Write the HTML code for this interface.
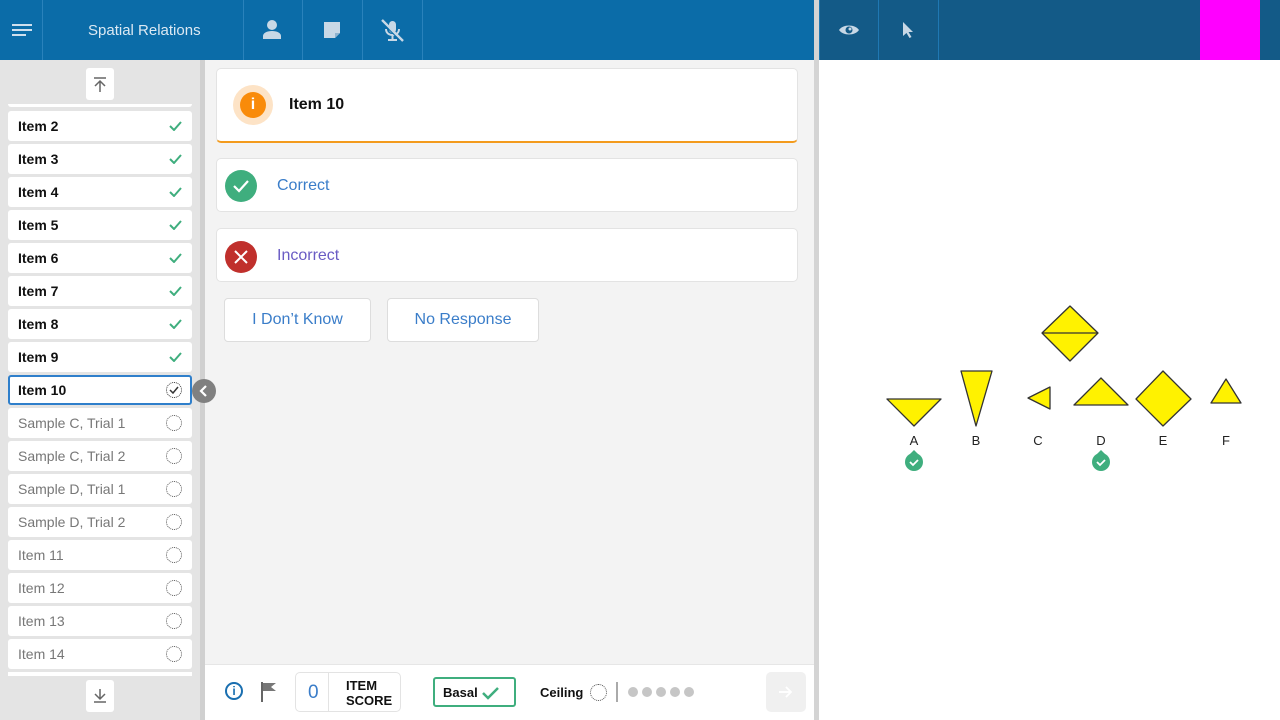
<!DOCTYPE html>
<html><head><style>
*{box-sizing:border-box;margin:0;padding:0}
body{width:1280px;height:720px;overflow:hidden;font-family:"Liberation Sans",sans-serif;background:#fff;position:relative}
.abs{position:absolute}
.hdr{left:0;top:0;width:814px;height:60px;background:#0b6ca8}
.sep{position:absolute;top:0;width:1px;height:60px;background:#2a82bb}
.item{position:absolute;left:8px;width:184px;height:30px;background:#fff;border-radius:3px;font-size:14px;line-height:30px;padding-left:10px;color:#111;font-weight:bold}
.item.g{font-weight:normal;color:#777}
.item .ck{position:absolute;right:10px;top:9px}
.item .dc{position:absolute;right:10px;top:7px;width:16px;height:16px;border:1.5px dotted #555;border-radius:50%}
.card{position:absolute;left:216px;width:582px;background:#fff;border:1px solid #e3e3e3;border-radius:5px}
.btn{position:absolute;top:298px;height:44px;background:#fff;border:1px solid #ddd;border-radius:4px;color:#3a7dc9;font-size:16px;line-height:42px;text-align:center}
</style></head><body>
<div class="abs hdr">
  <svg class="abs" style="left:12px;top:24px" width="20" height="12"><rect y="0" width="20" height="2" fill="#cfe0ee"/><rect y="5" width="20" height="2" fill="#cfe0ee"/><rect y="10" width="14" height="2" fill="#cfe0ee"/></svg>
  <div class="sep" style="left:42px"></div>
  <div class="abs" style="left:88px;top:22px;color:#dce9f3;font-size:15px">Spatial Relations</div>
  <div class="sep" style="left:243px"></div>
  <svg class="abs" style="left:262px;top:20px" width="20" height="19"><circle cx="10" cy="5" r="5" fill="#c8d8e6"/><path d="M1 19v-3c0-3 4-5 9-5s9 2 9 5v3z" fill="#c8d8e6"/></svg>
  <div class="sep" style="left:302px"></div>
  <svg class="abs" style="left:324px;top:22px" width="16" height="16"><path d="M0 0h16v11l-5 5H0z" fill="#c8d8e6"/><path d="M11 16v-5h5" fill="#8fb3cf"/></svg>
  <div class="sep" style="left:362px"></div>
  <svg class="abs" style="left:380px;top:19px" width="25" height="24"><rect x="9" y="2" width="7" height="12" rx="3.5" fill="#c8d8e6"/><path d="M6 10c0 4 3 6 6.5 6s6.5-2 6.5-6M12.5 16v4M8 21h9" stroke="#c8d8e6" stroke-width="2" fill="none"/><path d="M2 1l21 21" stroke="#c8d8e6" stroke-width="2.5"/><path d="M2 1l21 21" stroke="#0b6ca8" stroke-width="1" transform="translate(-1.5,1)"/></svg>
  <div class="sep" style="left:422px"></div>
</div>
<div class="abs" style="left:814px;top:0;width:5px;height:720px;background:#d4d4d4"></div>
<div class="abs" style="left:819px;top:0;width:461px;height:60px;background:#135a87">
  <div class="sep" style="left:0;background:#1f78b3"></div>
  <svg class="abs" style="left:20px;top:24px" width="20" height="12"><path d="M0 6C4 0 16 0 20 6C16 12 4 12 0 6z" fill="#c8d8e6"/><circle cx="10" cy="6" r="3.5" fill="#135a87"/><circle cx="11" cy="5" r="1.5" fill="#c8d8e6"/></svg>
  <div class="sep" style="left:59px;background:#1f78b3"></div>
  <svg class="abs" style="left:84px;top:22px" width="12" height="16"><path d="M0 0v14l3.5-3 3 5 2-1-3-5H10z" fill="#c8d8e6"/></svg>
  <div class="sep" style="left:119px;background:#1f78b3"></div>
  <div class="abs" style="left:381px;top:0;width:60px;height:60px;background:#ff00ff"></div>
</div>
<!-- sidebar -->
<div class="abs" style="left:0;top:60px;width:200px;height:660px;background:#e4e4e4"></div>
<div class="abs" style="left:200px;top:60px;width:5px;height:660px;background:#d0d0d0"></div>
<div class="abs" style="left:86px;top:68px;width:28px;height:32px;background:#fff;border-radius:3px"><svg class="abs" style="left:7px;top:9px" width="14" height="15"><path d="M1 1h12M7 4v11M2 9l5-5 5 5" stroke="#666" stroke-width="1.5" fill="none"/></svg></div>
<div class="abs" style="left:8px;top:104px;width:184px;height:3px;background:#fff;border-radius:0 0 3px 3px"></div>
<div class="item" style="top:111px">Item 2<svg class="ck" width="13" height="11"><path d="M1 6l4 4 7-8" stroke="#3fae7e" stroke-width="2" fill="none"/></svg></div>
<div class="item" style="top:144px">Item 3<svg class="ck" width="13" height="11"><path d="M1 6l4 4 7-8" stroke="#3fae7e" stroke-width="2" fill="none"/></svg></div>
<div class="item" style="top:177px">Item 4<svg class="ck" width="13" height="11"><path d="M1 6l4 4 7-8" stroke="#3fae7e" stroke-width="2" fill="none"/></svg></div>
<div class="item" style="top:210px">Item 5<svg class="ck" width="13" height="11"><path d="M1 6l4 4 7-8" stroke="#3fae7e" stroke-width="2" fill="none"/></svg></div>
<div class="item" style="top:243px">Item 6<svg class="ck" width="13" height="11"><path d="M1 6l4 4 7-8" stroke="#3fae7e" stroke-width="2" fill="none"/></svg></div>
<div class="item" style="top:276px">Item 7<svg class="ck" width="13" height="11"><path d="M1 6l4 4 7-8" stroke="#3fae7e" stroke-width="2" fill="none"/></svg></div>
<div class="item" style="top:309px">Item 8<svg class="ck" width="13" height="11"><path d="M1 6l4 4 7-8" stroke="#3fae7e" stroke-width="2" fill="none"/></svg></div>
<div class="item" style="top:342px">Item 9<svg class="ck" width="13" height="11"><path d="M1 6l4 4 7-8" stroke="#3fae7e" stroke-width="2" fill="none"/></svg></div>
<div class="item" style="top:375px;border:2px solid #2f7fcb;line-height:26px;padding-left:8px">Item 10<span class="dc" style="top:5px;right:8px;border-color:#333"></span><svg class="abs" style="right:11px;top:9px" width="10" height="8"><path d="M1 4l3 3 5-6" stroke="#333" stroke-width="1.5" fill="none"/></svg></div>
<div class="item g" style="top:408px">Sample C, Trial 1<span class="dc"></span></div>
<div class="item g" style="top:441px">Sample C, Trial 2<span class="dc"></span></div>
<div class="item g" style="top:474px">Sample D, Trial 1<span class="dc"></span></div>
<div class="item g" style="top:507px">Sample D, Trial 2<span class="dc"></span></div>
<div class="item g" style="top:540px">Item 11<span class="dc"></span></div>
<div class="item g" style="top:573px">Item 12<span class="dc"></span></div>
<div class="item g" style="top:606px">Item 13<span class="dc"></span></div>
<div class="item g" style="top:639px">Item 14<span class="dc"></span></div>
<div class="abs" style="left:8px;top:672px;width:184px;height:4px;background:#fff"></div>
<div class="abs" style="left:86px;top:680px;width:28px;height:32px;background:#fff;border-radius:3px"><svg class="abs" style="left:7px;top:8px" width="14" height="15"><path d="M1 14h12M7 1v10M2 6l5 5 5-5" stroke="#666" stroke-width="1.5" fill="none"/></svg></div>
<!-- content -->
<div class="abs" style="left:205px;top:60px;width:609px;height:604px;background:#f3f3f3"></div>
<div class="abs" style="left:192px;top:379px;width:24px;height:24px;border-radius:50%;background:#808080"><svg class="abs" style="left:7px;top:6px" width="10" height="12"><path d="M7 1L2 6l5 5" stroke="#fff" stroke-width="2.2" fill="none"/></svg></div>
<div class="card" style="top:68px;height:75px;border-bottom:2px solid #f39b1d">
  <div class="abs" style="left:16px;top:16px;width:40px;height:40px;border-radius:50%;background:#fde3c6"></div>
  <div class="abs" style="left:23px;top:23px;width:26px;height:26px;border-radius:50%;background:#f98b0a;color:#fff;font-weight:bold;text-align:center;font-size:16px;line-height:26px">i</div>
  <div class="abs" style="left:72px;top:27px;font-size:16px;color:#111;font-weight:bold">Item 10</div>
</div>
<div class="card" style="top:158px;height:54px">
  <div class="abs" style="left:8px;top:11px;width:32px;height:32px;border-radius:50%;background:#3fae7e"><svg class="abs" style="left:8px;top:9px" width="16" height="14"><path d="M1 7l5 5 9-10" stroke="#fff" stroke-width="2.2" fill="none"/></svg></div>
  <div class="abs" style="left:60px;top:18px;font-size:16px;color:#3a7dc9">Correct</div>
</div>
<div class="card" style="top:228px;height:54px">
  <div class="abs" style="left:8px;top:12px;width:32px;height:32px;border-radius:50%;background:#c0302c"><svg class="abs" style="left:9px;top:9px" width="14" height="14"><path d="M1 1l12 12M13 1L1 13" stroke="#fff" stroke-width="2"/></svg></div>
  <div class="abs" style="left:60px;top:18px;font-size:16px;color:#6a5cc4">Incorrect</div>
</div>
<div class="btn" style="left:224px;width:147px">I Don’t Know</div>
<div class="btn" style="left:387px;width:152px">No Response</div>
<!-- footer -->
<div class="abs" style="left:205px;top:664px;width:609px;height:56px;background:#fff;border-top:1px solid #e6e6e6"></div>
<div class="abs" style="left:225px;top:682px;width:18px;height:18px;border:2px solid #1a6fb0;border-radius:50%;color:#1a6fb0;font-size:12px;font-weight:bold;text-align:center;line-height:14px">i</div>
<svg class="abs" style="left:261px;top:682px" width="16" height="20"><path d="M1 0v20" stroke="#666" stroke-width="2"/><path d="M2 1h13l-5 4 5 4H2z" fill="#777"/></svg>
<div class="abs" style="left:295px;top:672px;width:106px;height:40px;border:1px solid #e3e3e3;border-radius:5px"><div class="abs" style="left:32px;top:0;width:1px;height:38px;background:#e3e3e3"></div><div class="abs" style="left:12px;top:9px;font-size:19px;color:#3a7dc9">0</div><div class="abs" style="left:50px;top:5px;font-size:13px;font-weight:bold;line-height:15px;color:#111">ITEM<br>SCORE</div></div>
<div class="abs" style="left:433px;top:677px;width:83px;height:30px;border:2px solid #3fae7e;border-radius:3px"><span class="abs" style="left:8px;top:6px;font-size:13px;font-weight:bold;color:#111">Basal</span><svg class="abs" style="left:47px;top:7px" width="18" height="14"><path d="M1 7l5 5 10-10" stroke="#3fae7e" stroke-width="2.5" fill="none"/></svg></div>
<div class="abs" style="left:540px;top:685px;font-size:13px;font-weight:bold;color:#111">Ceiling</div>
<div class="abs" style="left:590px;top:684px;width:17px;height:17px;border:1.5px dotted #555;border-radius:50%"></div>
<div class="abs" style="left:616px;top:682px;width:2px;height:20px;background:#aaa"></div>
<svg class="abs" style="left:627px;top:686px" width="75" height="12"><g fill="#c6c6c6"><circle cx="6" cy="6" r="5"/><circle cx="20" cy="6" r="5"/><circle cx="34" cy="6" r="5"/><circle cx="48" cy="6" r="5"/><circle cx="62" cy="6" r="5"/></g></svg>
<div class="abs" style="left:766px;top:672px;width:40px;height:40px;background:#f0f0f0;border-radius:5px"><svg class="abs" style="left:13px;top:13px" width="14" height="14"><path d="M0 7h12M7 2l5 5-5 5" stroke="#fff" stroke-width="1.8" fill="none"/></svg></div>
<!-- shapes -->
<svg class="abs" style="left:819px;top:60px" width="461" height="660">
<g transform="translate(-819,-60)" fill="#fff200" stroke="#333" stroke-width="1.3" stroke-linejoin="round">
<path d="M1070 306L1098 333L1070 361L1042 333Z"/><path d="M1042 333H1098"/>
<path d="M887 399H941L914 426Z"/>
<path d="M961 371H992L976 426Z"/>
<path d="M1028 398L1050 387V409Z"/>
<path d="M1074 405H1128L1101 378Z"/>
<path d="M1136 399L1163 371L1191 399L1163 426Z"/>
<path d="M1211 403H1241L1226 379Z"/>
</g>
<g transform="translate(-819,-60)" font-family="Liberation Sans, sans-serif" font-size="13" fill="#222" text-anchor="middle">
<text x="914" y="445">A</text><text x="976" y="445">B</text><text x="1038" y="445">C</text><text x="1101" y="445">D</text><text x="1163" y="445">E</text><text x="1226" y="445">F</text>
<g fill="#3fae7e"><circle cx="914" cy="462" r="9"/><path d="M910 454l4-4 4 4z"/><circle cx="1101" cy="462" r="9"/><path d="M1097 454l4-4 4 4z"/></g>
<g stroke="#fff" stroke-width="1.8" fill="none"><path d="M910 462l3 3 5-5"/><path d="M1097 462l3 3 5-5"/></g>
</g>
</svg>
</body></html>
